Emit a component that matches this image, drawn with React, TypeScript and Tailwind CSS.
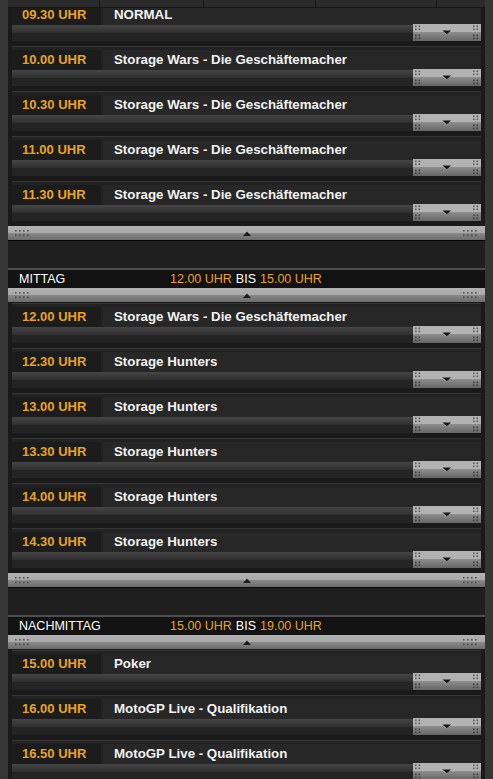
import React from 'react';

type Show = { time: string; title: string };
type Section = { name?: string; from?: string; to?: string; shows: Show[] };

const SW = 'Storage Wars - Die Geschäftemacher';
const SH = 'Storage Hunters';
const MGP = 'MotoGP Live - Qualifikation';

const SECTIONS: Section[] = [
  {
    shows: [
      { time: '09.30 UHR', title: 'NORMAL' },
      { time: '10.00 UHR', title: SW },
      { time: '10.30 UHR', title: SW },
      { time: '11.00 UHR', title: SW },
      { time: '11.30 UHR', title: SW },
    ],
  },
  {
    name: 'MITTAG',
    from: '12.00 UHR',
    to: '15.00 UHR',
    shows: [
      { time: '12.00 UHR', title: SW },
      { time: '12.30 UHR', title: SH },
      { time: '13.00 UHR', title: SH },
      { time: '13.30 UHR', title: SH },
      { time: '14.00 UHR', title: SH },
      { time: '14.30 UHR', title: SH },
    ],
  },
  {
    name: 'NACHMITTAG',
    from: '15.00 UHR',
    to: '19.00 UHR',
    shows: [
      { time: '15.00 UHR', title: 'Poker' },
      { time: '16.00 UHR', title: MGP },
      { time: '16.50 UHR', title: MGP },
    ],
  },
];

const Dots = () => (
  <svg width="15" height="8" viewBox="0 0 15 8">
    {[0, 4, 8, 12].map(x => (
      <g key={x}>
        <rect x={x} y={1} width="1.6" height="1.6" fill="#555" />
        <rect x={x} y={5.5} width="1.6" height="1.6" fill="#4a4a4a" />
      </g>
    ))}
  </svg>
);

const CollapseBar = () => (
  <div className="h-[14px] flex items-center justify-between px-[7px] bg-[linear-gradient(#b2b2b2_0%,#a9a9a9_50%,#8a8a8a_50%,#6c6c6c_100%)]">
    <Dots />
    <svg width="8" height="5" viewBox="0 0 8 5">
      <polygon points="0,5 8,5 4,0.5" fill="#1c1c1c" />
    </svg>
    <Dots />
  </div>
);

const Handle = () => (
  <svg width="68" height="17" viewBox="0 0 68 17" className="block shrink-0 -mt-[1px]">
    <defs>
      <linearGradient id="hb" x1="0" y1="0" x2="0" y2="1">
        <stop offset="0" stopColor="#8e8e8e" />
        <stop offset="1" stopColor="#666" />
      </linearGradient>
    </defs>
    <rect x="0" y="0" width="68" height="8" fill="#b2b2b2" />
    <rect x="0" y="8" width="68" height="9" fill="url(#hb)" />
    {[2, 5.5, 60, 63.5].map(x => (
      <g key={x}>
        <rect x={x} y={1.5} width="1.6" height="1.6" fill="#5e5e5e" />
        <rect x={x} y={4.5} width="1.6" height="1.6" fill="#5e5e5e" />
        <rect x={x} y={10.5} width="1.6" height="1.6" fill="#3e3e3e" />
        <rect x={x} y={13.5} width="1.6" height="1.6" fill="#3e3e3e" />
      </g>
    ))}
    <polygon points="29,6.5 38,6.5 33.5,10.5" fill="#161616" />
    <line x1="29" y1="6.5" x2="33.5" y2="10.5" stroke="#d8d8d8" strokeWidth="0.6" />
  </svg>
);

const Row = ({ show }: { show: Show }) => (
  <div className="mx-[4px] mb-[5px] border-t border-[#363636] bg-[#222]">
    <div className="pt-[3px] flex h-[23px]">
      <div className="w-[89px] bg-[#1c1c1c] pl-[10px] flex items-center text-[13px] font-bold text-[#e8a41c]">
        {show.time}
      </div>
      <div className="flex-1 ml-[2px] bg-[#272727] pl-[11px] flex items-center text-[13.3px] font-bold text-[#f2f2f2]">
        {show.title}
      </div>
    </div>
    <div className="flex h-[16px]">
      <div className="flex-1 h-[16px] flex flex-col">
        <div className="h-[8px] bg-[linear-gradient(#464646,#2e2e2e)]" />
        <div className="h-[8px] bg-[#242424]" />
      </div>
      <Handle />
    </div>
  </div>
);

const BlockHeader = ({ s }: { s: Section }) => (
  <div>
    <div className="h-[27px] bg-[#1f1f1f]" />
    <div className="h-[2px] bg-[#4e4e4e]" />
    <div className="h-[18px] bg-[#121212] flex items-center pl-[11px] text-[12.5px] text-white">
      <span className="w-[151px]">{s.name}</span>
      <span className="text-[#e8a41c]">{s.from}</span>
      <span className="mx-[4px]">BIS</span>
      <span className="text-[#e8a41c]">{s.to}</span>
    </div>
    <CollapseBar />
    <div className="h-[1px]" />
  </div>
);

export default function App() {
  return (
    <div className="w-[493px] h-[779px] overflow-hidden bg-[#363636] flex font-['Liberation_Sans',Arial,sans-serif]">
      <div className="w-[8px] shrink-0" />
      <div className="flex-1 bg-[#1a1a1a] flex flex-col overflow-hidden">
        <div className="h-[8px] shrink-0 flex bg-[#2b2b2b] border-b border-[#161616]">
          <div className="w-[92px] border-r border-[#181818]" />
          <div className="w-[104px] border-r border-[#181818]" />
          <div className="w-[112px] border-r border-[#181818]" />
          <div className="w-[121px] border-r border-[#181818]" />
          <div className="flex-1" />
        </div>
        <div className="flex-1 overflow-hidden">
          <div className="-mt-[7px]">
            {SECTIONS.map((s, i) => (
              <div key={i}>
                {s.name && <BlockHeader s={s} />}
                {s.shows.map((show, j) => (
                  <Row key={j} show={show} />
                ))}
                <CollapseBar />
                <div className="h-[1px] bg-[#050505]" />
              </div>
            ))}
          </div>
        </div>
      </div>
      <div className="w-[8px] shrink-0" />
    </div>
  );
}
